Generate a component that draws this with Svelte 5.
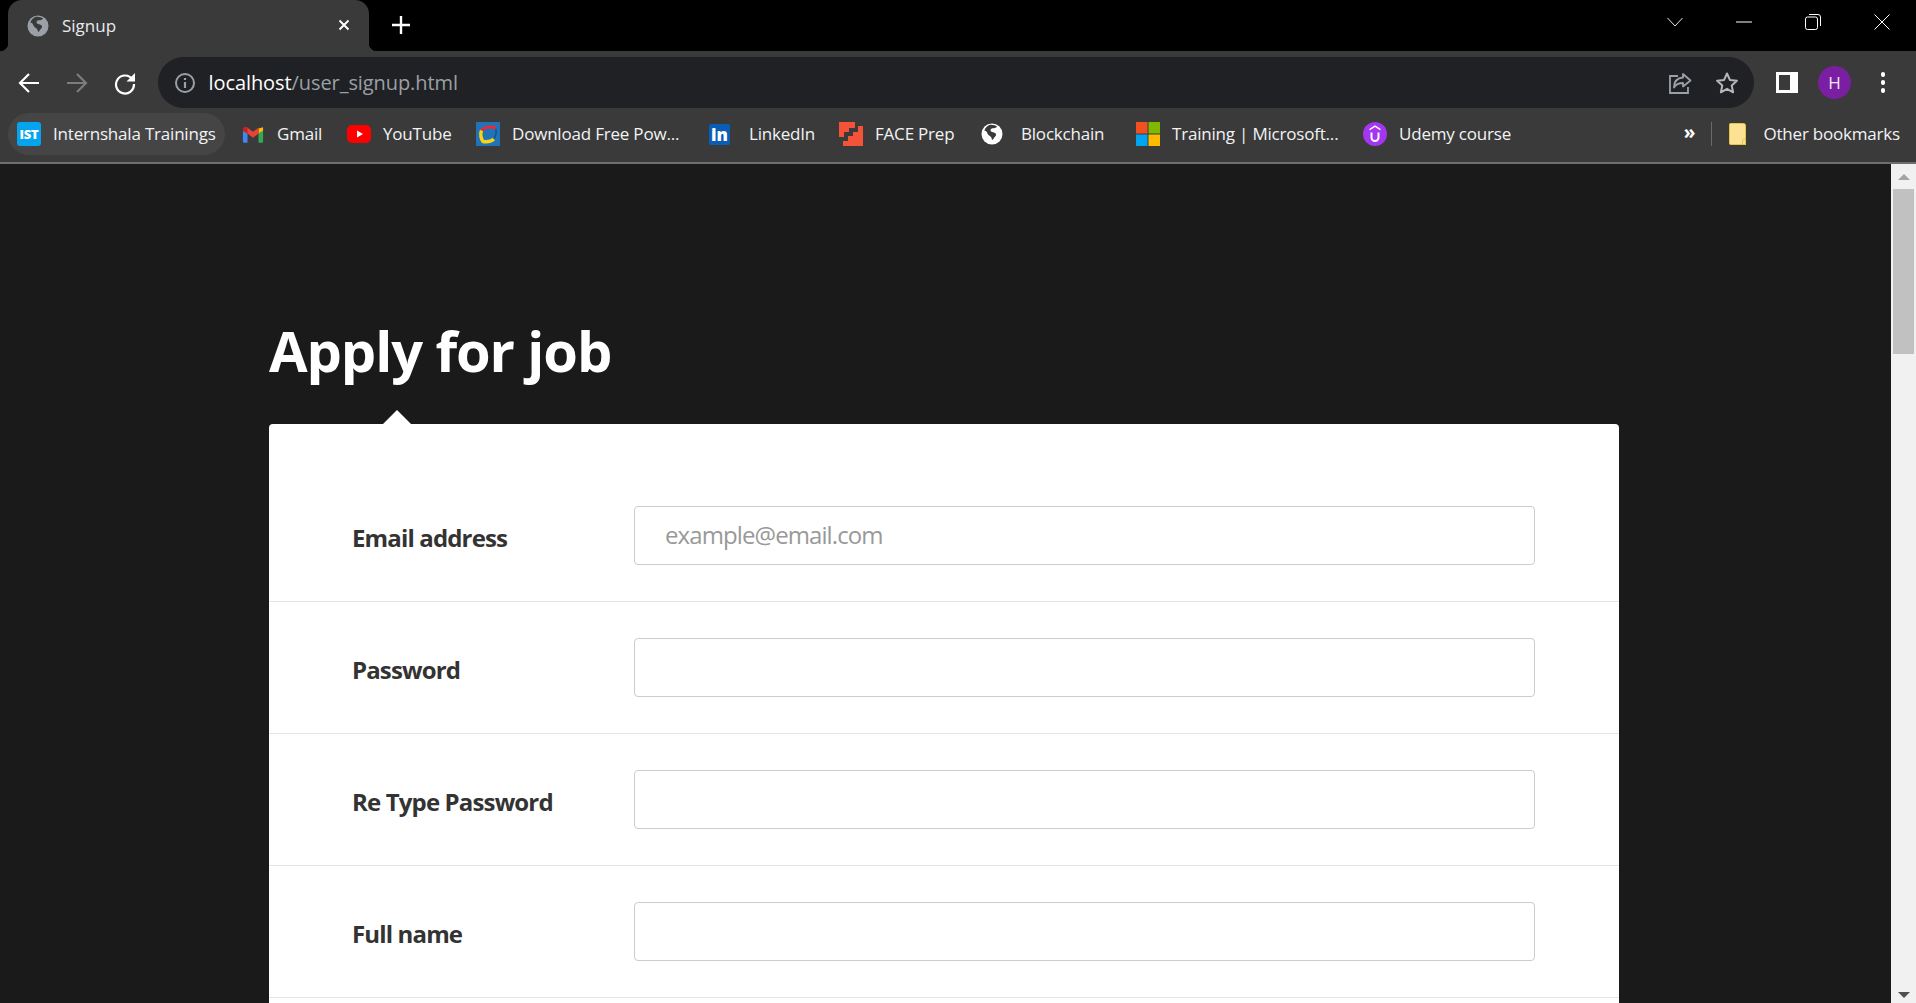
<script lang="ts">
	const bookmarks = [
		{ label: 'Internshala Trainings', icon: 'ist', width: 217, active: true },
		{ label: 'Gmail', icon: 'gmail', width: 97 },
		{ label: 'YouTube', icon: 'youtube', width: 121 },
		{ label: 'Download Free Pow...', icon: 'ppt', width: 225 },
		{ label: 'LinkedIn', icon: 'linkedin', width: 122 },
		{ label: 'FACE Prep', icon: 'face', width: 133 },
		{ label: 'Blockchain', icon: 'globe', width: 148 },
		{ label: 'Training | Microsoft...', icon: 'ms', width: 219 },
		{ label: 'Udemy course', icon: 'udemy', width: 170 }
	];

	const fields = [
		{ label: 'Email address', placeholder: 'example@email.com', type: 'email' },
		{ label: 'Password', placeholder: '', type: 'password' },
		{ label: 'Re Type Password', placeholder: '', type: 'password' },
		{ label: 'Full name', placeholder: '', type: 'text' }
	];
</script>

{#snippet globe(fill, cut)}
	<svg viewBox="0 0 22 22" width="22" height="22">
		<circle cx="11" cy="11" r="10.5" fill={fill} />
		<path
			d="M7 2.500c3-1 6-.6 8 .5-1 1.500-3 1.600-4.500 2.300C9 6 8.500 7.500 9.500 8.500c1.500 1 3.500.5 5 1.500 1 .8.800 2.200 0 3-1 1-1 3-2.500 4-.8-1.500-1-3-2.500-3.500-1.500-.5-2.800-1.500-3.500-3C5.500 9 4 8.500 3 9c.3-3 2-5.300 4-6.500z"
			fill={cut}
			transform="rotate(8 11 11)"
		/>
	</svg>
{/snippet}

<div class="browser">
	<!-- Tab strip -->
	<div class="tabstrip">
		<div class="tab">
			<span class="favicon">{@render globe('#9aa0a6', '#3a3a3a')}</span>
			<span class="tab-title">Signup</span>
			<svg class="tab-close" viewBox="0 0 14 14" width="14" height="14">
				<path d="M2.500 2.500l9 9M11.500 2.500l-9 9" stroke="#fff" stroke-width="2" fill="none" />
			</svg>
		</div>
		<svg class="new-tab" viewBox="0 0 20 20" width="20" height="20">
			<path d="M10 1v18M1 10h18" stroke="#fff" stroke-width="2.400" fill="none" />
		</svg>
		<div class="win-controls">
			<div class="win-btn">
				<svg viewBox="0 0 16 10" width="16" height="10">
					<path d="M.5 1l7.500 8 7.500-8" stroke="#e8e8e8" fill="none" />
				</svg>
			</div>
			<div class="win-btn">
				<svg viewBox="0 0 16 2" width="16" height="2"><path d="M0 1h16" stroke="#fff" /></svg>
			</div>
			<div class="win-btn">
				<svg viewBox="0 0 16 16" width="16" height="16">
					<rect x=".5" y="3" width="12" height="12.500" rx="2" stroke="#fff" fill="none" />
					<path d="M4 .5h9a2.500 2.500 0 0 1 2.500 2.500v9" stroke="#fff" fill="none" />
				</svg>
			</div>
			<div class="win-btn">
				<svg viewBox="0 0 16 16" width="16" height="16">
					<path d="M.5.5l15 15M15.500.5l-15 15" stroke="#fff" fill="none" />
				</svg>
			</div>
		</div>
	</div>

	<!-- Address bar row -->
	<div class="toolbar">
		<svg class="nav" viewBox="0 0 24 24" width="24" height="24">
			<path d="M22 12H4M12 3l-9 9 9 9" stroke="#fff" stroke-width="2.200" fill="none" />
		</svg>
		<svg class="nav" viewBox="0 0 24 24" width="24" height="24">
			<path d="M2 12h18M12 3l9 9-9 9" stroke="#7c7c7c" stroke-width="2.200" fill="none" />
		</svg>
		<svg class="nav" viewBox="0 0 24 24" width="24" height="24">
			<path d="M19.500 8.500A9 9 0 1 0 21 13" stroke="#fff" stroke-width="2.200" fill="none" />
			<path d="M22 2v8.500h-8.500z" fill="#fff" />
		</svg>
		<div class="omnibox">
			<svg class="info" viewBox="0 0 22 22" width="22" height="22">
				<circle cx="11" cy="11" r="9" stroke="#9aa0a6" stroke-width="2" fill="none" />
				<path d="M11 10v6M11 6v2" stroke="#9aa0a6" stroke-width="2.200" fill="none" />
			</svg>
			<span class="url"><span class="host">localhost</span>/user_signup.html</span>
			<svg class="share" viewBox="0 0 24 24" width="24" height="24">
				<path d="M10 5H2v17h18v-6" stroke="#9aa0a6" stroke-width="1.800" fill="none" />
				<path
					d="M15 3l7.500 6.500L15 15.500v-3.500c-4 0-7 1-9 4.500 0-6 3.500-9.500 9-10z"
					stroke="#9aa0a6"
					stroke-width="1.800"
					stroke-linejoin="round"
					fill="none"
				/>
			</svg>
			<svg class="star" viewBox="0 0 24 24" width="24" height="24">
				<path
					d="M12 2.500l2.900 6.400 7 .8-5.200 4.700 1.400 6.900-6.100-3.500-6.100 3.500 1.400-6.900-5.200-4.700 7-.8z"
					stroke="#b4b7b9"
					stroke-width="2"
					stroke-linejoin="round"
					fill="none"
				/>
			</svg>
		</div>
		<div class="side-panel"><span></span></div>
		<div class="avatar">H</div>
		<div class="dots"><i></i><i></i><i></i></div>
	</div>

	<!-- Bookmarks bar -->
	<div class="bookmarks">
		{#each bookmarks as b}
			<div class="bookmark" class:active={b.active} style="width: {b.width}px">
				{#if b.icon === 'ist'}
					<span class="ic-ist">IST</span>
				{:else if b.icon === 'gmail'}
					<svg class="ic ic-narrow" viewBox="0 0 24 18" width="22" height="17">
						<path d="M1 5v11.500c0 .8.700 1.500 1.500 1.500H6V8z" fill="#4285f4" />
						<path d="M23 5v11.500c0 .8-.7 1.500-1.500 1.500H18V8z" fill="#34a853" />
						<path d="M18 8V2.500L23 1v4z" fill="#fbbc04" />
						<path d="M1 5c0-3.500 3-5 5-3.500L12 6l6-4.500V8l-6 4.500L6 8z" fill="#ea4335" />
						<path d="M1 5V2.500C2 .8 4.500.5 6 1.500V8z" fill="#c5221f" />
					</svg>
				{:else if b.icon === 'youtube'}
					<svg class="ic" viewBox="0 0 24 24" width="24" height="24">
						<rect y="3" width="24" height="18" rx="5" fill="#f00" />
						<path d="M10 8.500l6 3.500-6 3.500z" fill="#fff" />
					</svg>
				{:else if b.icon === 'ppt'}
					<svg class="ic" viewBox="0 0 24 24" width="24" height="24">
						<rect width="24" height="24" fill="#2073b8" />
						<path d="M5.500 9C8 5 14 4 20 6" stroke="#e22c3c" stroke-width="3.200" fill="none" />
						<path d="M5.500 8.500C4 12 5 17 7 19.500c4 .8 8 0 11-2.500" stroke="#fbd40f" stroke-width="3.400" fill="none" />
						<path d="M20 7c.5 3 .2 6-2 10" stroke="#15568f" stroke-width="1.600" fill="none" />
					</svg>
				{:else if b.icon === 'linkedin'}
					<span class="ic-in">in</span>
				{:else if b.icon === 'face'}
					<svg class="ic" viewBox="0 0 24 24" width="24" height="24">
						<path d="M0 0h16v6h-6v4H5v5H0z" fill="#f4533a" />
						<path d="M24 4v20H4v-5h5v-5h5v-4h5V4z" fill="#f4533a" />
					</svg>
				{:else if b.icon === 'globe'}
					<span class="ic ic-globe">{@render globe('#fff', '#3a3a3a')}</span>
				{:else if b.icon === 'ms'}
					<svg class="ic" viewBox="0 0 24 24" width="24" height="24">
						<rect width="11.500" height="11.500" fill="#f25022" />
						<rect x="12.500" width="11.500" height="11.500" fill="#7fba00" />
						<rect y="12.500" width="11.500" height="11.500" fill="#00a4ef" />
						<rect x="12.500" y="12.500" width="11.500" height="11.500" fill="#ffb900" />
					</svg>
				{:else if b.icon === 'udemy'}
					<svg class="ic" viewBox="0 0 24 24" width="24" height="24">
						<circle cx="12" cy="12" r="12" fill="#a435f0" />
						<path d="M6.500 8.500L12 5l5.500 3.500V6.800L12 3.300 6.500 6.800z" fill="#fff" />
						<path d="M8.500 10.500v5a3.500 3.500 0 0 0 7 0v-5" stroke="#fff" stroke-width="2" fill="none" />
					</svg>
				{/if}
				<span class="bm-label">{b.label}</span>
			</div>
		{/each}
		<div class="bm-right">
			<span class="more">»</span>
			<span class="sep"></span>
			<svg class="folder" viewBox="0 0 18 22" width="18" height="22">
				<path d="M1.500.5h13a2 2 0 0 1 2 2v19h-15a1 1 0 0 1-1-1v-19a1 1 0 0 1 1-1z" fill="#fde293" stroke="#e8c34a" />
				<path d="M13.500 21.500v-4a1.500 1.500 0 0 1 3 0v4z" fill="#fde293" stroke="#e8c34a" />
			</svg>
			<span class="bm-label">Other bookmarks</span>
		</div>
	</div>

	<!-- Page -->
	<div class="viewport">
		<main class="page">
			<h1>Apply for job</h1>
			<form class="card">
				{#each fields as f}
					<div class="row">
						<label for={f.label}>{f.label}</label>
						<input id={f.label} type={f.type} placeholder={f.placeholder} />
					</div>
				{/each}
			</form>
		</main>
		<div class="scrollbar">
			<span class="arrow up"></span>
			<span class="thumb"></span>
			<span class="arrow down"></span>
		</div>
	</div>
</div>

<style>
	:global(body) {
		margin: 0;
		overflow: hidden;
		background: #1a1a1a;
	}

	.browser {
		display: flex;
		flex-direction: column;
		height: 1003px;
		overflow: hidden;
		font-family: 'Open Sans', 'Noto Sans', sans-serif;
		color: #fff;
	}

	/* Tab strip */
	.tabstrip {
		display: flex;
		align-items: center;
		height: 51px;
		flex: none;
		background: #000;
	}
	.tab {
		position: relative;
		display: flex;
		align-items: center;
		align-self: stretch;
		width: 361px;
		margin-left: 8px;
		padding: 0 18px 0 19px;
		box-sizing: border-box;
		background: #3a3a3a;
		border-radius: 14px 14px 0 0;
	}
	.tab::before,
	.tab::after {
		content: '';
		position: absolute;
		bottom: 0;
		width: 8px;
		height: 8px;
	}
	.tab::before {
		left: -8px;
		background: radial-gradient(circle at 0 0, transparent 8px, #3a3a3a 8.5px);
	}
	.tab::after {
		right: -8px;
		background: radial-gradient(circle at 100% 0, transparent 8px, #3a3a3a 8.5px);
	}
	.favicon {
		display: flex;
		margin-right: 13px;
	}
	.tab-title {
		font-size: 17px;
		color: #e8eaed;
	}
	.tab-close {
		margin-left: auto;
		margin-top: -2px;
	}
	.new-tab {
		margin-left: 22px;
		margin-top: -1px;
	}
	.win-controls {
		display: flex;
		margin-left: auto;
		align-self: stretch;
	}
	.win-btn {
		display: flex;
		align-items: center;
		justify-content: center;
		width: 69px;
		height: 44px;
	}

	/* Toolbar */
	.toolbar {
		display: flex;
		align-items: center;
		height: 57px;
		flex: none;
		padding: 6px 21px 0 16.500px;
		box-sizing: border-box;
		background: #3a3a3a;
	}
	.nav {
		margin-right: 24px;
		flex: none;
	}
	.nav:nth-child(3) {
		margin-right: 21px;
	}
	.omnibox {
		display: flex;
		align-items: center;
		flex: 1;
		height: 51px;
		padding: 0 15px 0 16px;
		background: #202124;
		border-radius: 26px;
	}
	.info {
		margin-right: 13px;
	}
	.url {
		font-size: 20px;
		letter-spacing: -0.08px;
		color: #9aa0a6;
	}
	.host {
		color: #fff;
	}
	.share {
		margin-left: auto;
		margin-right: 23px;
	}
	.side-panel {
		display: flex;
		justify-content: flex-end;
		width: 22px;
		height: 21px;
		margin-left: 22px;
		background: #fff;
	}
	.side-panel span {
		width: 11px;
		height: 15px;
		margin: 3px 8px 3px 3px;
		background: #3a3a3a;
	}
	.avatar {
		display: flex;
		align-items: center;
		justify-content: center;
		width: 33px;
		height: 33px;
		margin-left: 20px;
		border-radius: 50%;
		background: #7b1fa2;
		font-size: 17px;
		color: #f1e3f6;
	}
	.dots {
		display: flex;
		flex-direction: column;
		align-items: center;
		gap: 3.500px;
		width: 24px;
		margin-left: 20px;
	}
	.dots i {
		width: 4.500px;
		height: 4.500px;
		border-radius: 50%;
		background: #fff;
	}

	/* Bookmarks */
	.bookmarks {
		display: flex;
		align-items: center;
		gap: 8px;
		height: 56px;
		flex: none;
		padding: 6px 16px 8px 8px;
		box-sizing: border-box;
		background: #3a3a3a;
		border-bottom: 2px solid #6e6e6e;
	}
	.bookmark {
		display: flex;
		align-items: center;
		flex: none;
		height: 42px;
		padding-left: 9px;
		box-sizing: border-box;
		border-radius: 21px;
		white-space: nowrap;
	}
	.bookmark.active {
		background: #454545;
	}
	.bm-label {
		font-size: 17px;
		letter-spacing: -0.2px;
		color: #f1f3f4;
		margin-top: -1px;
	}
	.ic {
		display: flex;
		flex: none;
		margin-right: 12px;
	}
	.ic-narrow {
		margin-right: 13px;
	}
	.ic-globe {
		margin-left: 1px;
		margin-right: 18px;
	}
	.ic-ist {
		display: flex;
		align-items: center;
		justify-content: center;
		flex: none;
		width: 24px;
		height: 24px;
		margin-right: 12px;
		border-radius: 3px;
		background: #05a4ee;
		font-size: 13px;
		font-weight: 800;
		letter-spacing: -0.3px;
		color: #fff;
	}
	.ic-in {
		display: flex;
		align-items: center;
		justify-content: center;
		flex: none;
		width: 21px;
		height: 21px;
		margin-right: 19px;
		border-radius: 2px;
		background: #0a5db5;
		font-size: 17px;
		font-weight: 800;
		line-height: 1;
		color: #fff;
	}
	.bm-right {
		display: flex;
		align-items: center;
		margin-left: auto;
	}
	.more {
		font-size: 19px;
		font-weight: 700;
		line-height: 1;
		margin-top: -4px;
	}
	.sep {
		width: 1px;
		height: 24px;
		margin: 0 17px 0 16px;
		background: #6a6a6a;
	}
	.folder {
		margin-right: 16px;
	}

	/* Page */
	.viewport {
		display: flex;
		flex: 1;
		min-height: 0;
	}
	.page {
		flex: 1;
		min-width: 0;
		overflow: hidden;
		padding: 148px 0 0 269px;
		background: #1a1a1a;
	}
	h1 {
		margin: 0 0 35px;
		font-size: 56px;
		line-height: 77px;
		font-weight: 700;
		letter-spacing: -1.1px;
		color: #fff;
	}
	.card {
		position: relative;
		width: 1350px;
		padding: 46px 0 60px;
		background: #fff;
		border-radius: 4px;
	}
	.card::before {
		content: '';
		position: absolute;
		left: 114px;
		top: -14px;
		border: 14px solid transparent;
		border-top: 0;
		border-bottom-color: #fff;
	}
	.row {
		display: grid;
		grid-template-columns: 282px 901px;
		align-items: center;
		padding: 36px 84px 36px 83px;
		border-bottom: 1px solid #e5e5e5;
	}
	label {
		font-size: 24px;
		font-weight: 700;
		letter-spacing: -0.85px;
		color: #333;
		padding-top: 4px;
	}
	input {
		height: 59px;
		padding: 0 30px 2px;
		box-sizing: border-box;
		border: 1px solid #ccc;
		border-radius: 4px;
		outline: none;
		font-family: inherit;
		font-size: 24px;
		color: #333;
		background: #fff;
	}
	input::placeholder {
		color: #999;
		letter-spacing: -0.9px;
	}

	/* Fake scrollbar */
	.scrollbar {
		display: flex;
		flex-direction: column;
		align-items: center;
		width: 25px;
		flex: none;
		background: #f1f1f1;
	}
	.arrow {
		width: 0;
		height: 0;
		border: 6px solid transparent;
	}
	.arrow.up {
		margin-top: 10px;
		border-top: 0;
		border-bottom-color: #a3a3a3;
	}
	.arrow.down {
		margin-top: auto;
		margin-bottom: 5px;
		border-bottom: 0;
		border-top-color: #505050;
	}
	.thumb {
		width: 21px;
		height: 165px;
		margin-top: 9px;
		background: #c1c1c1;
	}
</style>
